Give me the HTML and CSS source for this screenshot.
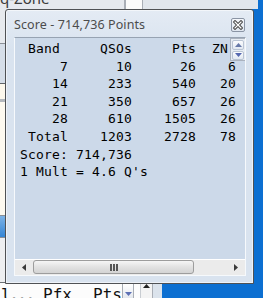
FILE: index.html
```html
<!DOCTYPE html>
<html lang="en">
<head>
    <meta charset="UTF-8">
    <meta name="viewport" content="width=device-width, initial-scale=1.0">
    <title>Score</title>
    <link rel="stylesheet" href="styles.css">
</head>
<body>
    <div class="back-top">
        <div class="tab-name"><span>q-Zone</span></div>
        <div class="tab-gap"></div>
        <div class="tab-rest"></div>
    </div>

    <div class="back-main">
        <div class="back-rows">
            <div class="row r1"></div>
            <div class="row r2"></div>
            <div class="row r3"></div>
            <div class="row r4"></div>
            <div class="row r5"></div>
            <div class="row r6"></div>
            <div class="row r7"></div>
        </div>
        <div class="back-foot">
            <span class="col-a">l...</span>
            <span class="col-b">Pfx</span>
            <span class="col-c">Pts</span>
            <span class="drop">
                <svg width="7" height="4" viewBox="0 0 7 4"><polygon points="0,0 7,0 3.5,4" fill="#5b6fb4"/></svg>
            </span>
            <span class="foot-gap"></span>
            <span class="foot-scroll">
                <svg width="7" height="4" viewBox="0 0 7 4"><polygon points="0,4 7,4 3.5,0" fill="#222"/></svg>
            </span>
            <span class="foot-rest"></span>
        </div>
    </div>

    <div class="score-win">
        <div class="title-bar">
            <span class="title">Score - 714,736 Points</span>
            <span class="close">
                <svg width="10" height="10" viewBox="0 0 10 10">
                    <path d="M2 2 L8 8 M8 2 L2 8" stroke="#4a4a4a" stroke-width="3.2" stroke-linecap="square"/>
                    <path d="M2 2 L8 8 M8 2 L2 8" stroke="#ffffff" stroke-width="1.2" stroke-linecap="square"/>
                </svg>
            </span>
        </div>

        <div class="client">
            <div class="view">
<pre class="score-text"> Band     QSOs     Pts  ZN
     7      10      26    6
    14     233     540   20
    21     350     657   26
    28     610    1505   26
 Total    1203    2728   78
Score: 714,736
1 Mult = 4.6 Q's</pre>
                <div class="spin">
                    <span class="spin-btn">
                        <svg width="7" height="4" viewBox="0 0 7 4"><polygon points="0,4 7,4 3.5,0" fill="#6678a8"/></svg>
                    </span>
                    <span class="spin-btn">
                        <svg width="7" height="4" viewBox="0 0 7 4"><polygon points="0,0 7,0 3.5,4" fill="#5568b0"/></svg>
                    </span>
                </div>
            </div>

            <div class="hscroll">
                <span class="arrow">
                    <svg width="4" height="7" viewBox="0 0 4 7"><polygon points="4,0 4,7 0,3.5" fill="#3a3a3a"/></svg>
                </span>
                <div class="track">
                    <div class="thumb">
                        <svg width="8" height="7" viewBox="0 0 8 7">
                            <rect x="0" y="0" width="2" height="7" fill="#555"/>
                            <rect x="3" y="0" width="2" height="7" fill="#555"/>
                            <rect x="6" y="0" width="2" height="7" fill="#555"/>
                        </svg>
                    </div>
                </div>
                <span class="arrow">
                    <svg width="4" height="7" viewBox="0 0 4 7"><polygon points="0,0 0,7 4,3.5" fill="#3a3a3a"/></svg>
                </span>
            </div>
        </div>
    </div>
</body>
</html>
```

FILE: styles.css
```css
* {
    box-sizing: border-box;
}

body {
    margin: 0;
    width: 263px;
    height: 298px;
    overflow: hidden;
    position: relative;
    background-color: #0c6fd1;
    font-family: "Noto Sans", sans-serif;
}

/* windows behind the score window */
.back-top {
    position: absolute;
    left: 0;
    top: 0;
    width: 258px;
    height: 9px;
    display: flex;
}

.tab-name {
    width: 126px;
    height: 9px;
    overflow: hidden;
    background: #e6e9ee;
    border-right: 2px solid #a9aeb6;
    color: #3c3c3c;
    font-size: 15px;
}

.tab-name span {
    display: block;
    margin-top: -10px;
    line-height: 16px;
}

.tab-gap {
    width: 17px;
    background: #fbfbfb;
    border-right: 1px solid #a9aeb6;
}

.tab-rest {
    flex-grow: 1;
    background: #e1e6ec;
}

.back-main {
    position: absolute;
    left: 0;
    top: 9px;
    width: 162px;
    height: 289px;
    display: flex;
    flex-direction: column;
}

.back-rows {
    flex-grow: 1;
    display: flex;
    flex-direction: column;
}

.row {
    border-bottom: 1px solid #8a8f96;
}

.r1 { height: 35px; background: #e7eaee; }
.r2 { height: 40px; background: #d6dee8; border-bottom-color: #606468; }
.r3 { height: 18px; background: #fdf8ec; border-bottom: 3px solid #b4b8bd; }
.r4 { height: 114px; background: #fdf9ef; }
.r5 { height: 22px; background: linear-gradient(#7db3e6, #3585d4); }
.r6 { height: 45px; background: #eeeff1; border-bottom-color: #6c7075; }
.r7 { flex-grow: 1; background: #fafafa; border-bottom: none; }

.back-foot {
    height: 15px;
    display: flex;
    background: #fcfcfc;
    font-family: "DejaVu Sans Mono", monospace;
    font-size: 16px;
    line-height: 15px;
    color: #111;
    overflow: hidden;
}

.back-foot span {
    display: flex;
    flex-shrink: 0;
}

.col-a { width: 42px; margin-left: 1px; padding-top: 4px; letter-spacing: -1.5px; }
.col-b { width: 50px; padding-top: 4px; }
.col-c { width: 29px; padding-top: 4px; }

.drop {
    width: 12px;
    justify-content: center;
    align-items: flex-end;
    padding-bottom: 2px;
    background: linear-gradient(#ffffff, #e4e8ee);
    border: 1px solid #a8adb5;
    border-bottom: none;
}

.foot-gap {
    width: 6px;
}

.foot-scroll {
    width: 13px;
    justify-content: center;
    padding-top: 1px;
    border-left: 1px solid #c9cdd2;
    border-right: 1px solid #a9aeb6;
    background: #f4f4f4;
}

.foot-rest {
    flex-grow: 1;
    background: #dbe3ec;
}

/* score window */
.score-win {
    position: absolute;
    left: 5px;
    top: 9px;
    width: 249px;
    height: 275px;
    border: 1px solid #4f5154;
    border-radius: 3px 3px 0 0;
    background: linear-gradient(#e4ebf4, #d9e3ef 40px);
    box-shadow: inset 0 0 0 1px rgba(255, 255, 255, 0.55);
    padding: 0 7px 7px 8px;
    display: flex;
    flex-direction: column;
}

.title-bar {
    height: 27px;
    display: flex;
    align-items: center;
    justify-content: space-between;
}

.title {
    font-size: 12.5px;
    color: #4c4c4c;
    margin-top: 1px;
    letter-spacing: 0.1px;
}

.close {
    width: 14px;
    height: 14px;
    margin-right: 1px;
    margin-top: 2px;
    border: 1px solid #8a94a4;
    border-radius: 2px;
    background: linear-gradient(#f4f7fb, #dfe6ef);
    display: flex;
    align-items: center;
    justify-content: center;
}

.client {
    flex-grow: 1;
    display: flex;
    flex-direction: column;
    background: #ccd9e9;
    border: 1px solid #f6f9fc;
    border-top-color: #97a3b2;
}

.view {
    flex-grow: 1;
    position: relative;
    overflow: hidden;
}

.score-text {
    margin: 0;
    padding: 2px 0 0 5px;
    font-family: "DejaVu Sans Mono", monospace;
    font-size: 13px;
    letter-spacing: 0.17px;
    line-height: 17.6px;
    color: #000;
}

.spin {
    position: absolute;
    top: 0;
    right: -1px;
    width: 16px;
    height: 23px;
    border: 1px solid #aab2be;
    background: #e6ecf3;
    display: flex;
    flex-direction: column;
    gap: 1px;
    padding: 1px 1px 0 1px;
}

.spin-btn {
    height: 10px;
    border: 1px solid #b9c4d3;
    border-radius: 2px;
    background: linear-gradient(#fbfcfe, #e1e8f1);
    display: flex;
    align-items: center;
    justify-content: center;
}

.hscroll {
    height: 16px;
    display: flex;
    align-items: center;
    background: #ebebeb;
    box-shadow: inset 0 1px #ffffff;
}

.arrow {
    width: 18px;
    display: flex;
    justify-content: center;
}

.track {
    flex-grow: 1;
    height: 16px;
    padding: 1px 0;
}

.thumb {
    width: 161px;
    height: 14px;
    border: 1px solid #9d9d9d;
    border-radius: 3px;
    background: linear-gradient(#f6f6f6, #e2e2e2 50%, #d4d4d4);
    display: flex;
    align-items: center;
    justify-content: center;
}
```
